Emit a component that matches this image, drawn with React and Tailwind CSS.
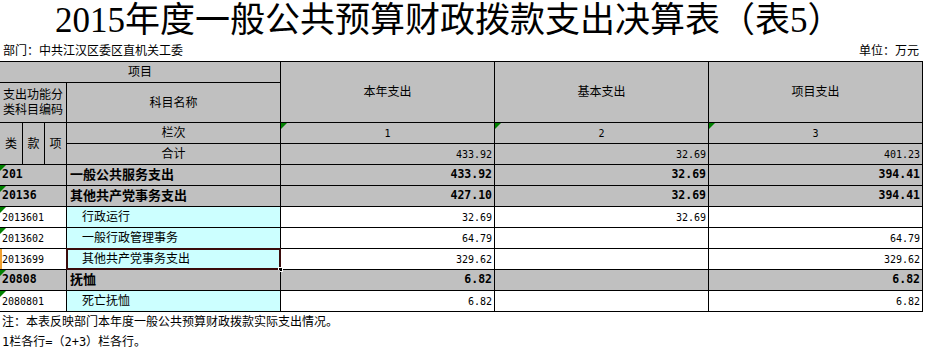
import React from "react";

const mono = "font-['DejaVu_Sans_Mono','Noto_Sans_CJK_SC',monospace]";

function Tri() {
  return (
    <span className="absolute left-0 top-0 w-0 h-0 border-t-[6px] border-r-[6px] border-t-[#008000] border-r-transparent" />
  );
}

function Num({ v, bold, bg }) {
  return (
    <div
      className={`${bg} flex items-center justify-end pr-[2px] ${mono} ${
        bold ? "text-[11.5px] font-bold" : "text-[10px]"
      }`}
    >
      {v}
    </div>
  );
}

const linhas = [
  { code: "201", nome: "一般公共服务支出", vals: ["433.92", "32.69", "394.41"], bold: true },
  { code: "20136", nome: "其他共产党事务支出", vals: ["427.10", "32.69", "394.41"], bold: true },
  { code: "2013601", nome: "行政运行", vals: ["32.69", "32.69", ""] },
  { code: "2013602", nome: "一般行政管理事务", vals: ["64.79", "", "64.79"] },
  { code: "2013699", nome: "其他共产党事务支出", vals: ["329.62", "", "329.62"], sel: true },
  { code: "20808", nome: "抚恤", vals: ["6.82", "", "6.82"], bold: true },
  { code: "2080801", nome: "死亡抚恤", vals: ["6.82", "", "6.82"] },
];

export default function App() {
  return (
    <div className="w-[925px] h-[354px] bg-white text-black font-['Liberation_Sans','Noto_Sans_CJK_SC',sans-serif] overflow-hidden">
      {/* TITULO */}
      <div className="h-[41px] pl-[55px] text-[35px] leading-[41px] whitespace-nowrap font-['Liberation_Serif','Noto_Sans_CJK_SC',serif]">
        2015年度一般公共预算财政拨款支出决算表（表5）
      </div>

      <div className="h-[20px] flex items-center justify-between pl-[3px] pr-[6px] text-[12px]">
        <span>部门：中共江汉区委区直机关工委</span>
        <span>单位：万元</span>
      </div>

      {/* TABELA */}
      <div className="w-[923px] grid grid-cols-[22px_21px_21px_213px_213px_213px_213px] grid-rows-[20px_39px_20px_20px_repeat(7,20px)] gap-px bg-black pt-px pr-px pb-px text-[12px]">
        <div className="col-span-4 bg-[#c0c0c0] flex items-center justify-center">项目</div>
        <div className="row-span-2 bg-[#c0c0c0] flex items-center justify-center">本年支出</div>
        <div className="row-span-2 bg-[#c0c0c0] flex items-center justify-center">基本支出</div>
        <div className="row-span-2 bg-[#c0c0c0] flex items-center justify-center">项目支出</div>

        <div className="col-span-3 bg-[#c0c0c0] flex items-center pl-[3px] leading-[15px]">
          支出功能分类科目编码
        </div>
        <div className="bg-[#c0c0c0] flex items-center justify-center">科目名称</div>

        <div className="row-span-2 bg-[#c0c0c0] flex items-center justify-center">类</div>
        <div className="row-span-2 bg-[#c0c0c0] flex items-center justify-center">款</div>
        <div className="row-span-2 bg-[#c0c0c0] flex items-center justify-center">项</div>
        <div className="bg-[#c0c0c0] flex items-center justify-center">栏次</div>
        {["1", "2", "3"].map(n => (
          <div key={n} className={`relative bg-[#c0c0c0] flex items-center justify-center ${mono} text-[10px]`}>
            <Tri />
            {n}
          </div>
        ))}

        <div className="bg-[#c0c0c0] flex items-center justify-center">合计</div>
        <Num v="433.92" bg="bg-[#c0c0c0]" />
        <Num v="32.69" bg="bg-[#c0c0c0]" />
        <Num v="401.23" bg="bg-[#c0c0c0]" />

        {linhas.map((l, i) => {
          const bgRow = l.bold ? "bg-[#c0c0c0]" : "bg-white";
          const bgNome = l.bold ? "bg-[#c0c0c0]" : "bg-[#ccffff]";
          return (
            <React.Fragment key={i}>
              <div
                className={`relative col-span-3 ${bgRow} flex items-center pl-[2px] ${mono} ${
                  l.bold ? "text-[11.5px] font-bold" : "text-[10px]"
                }`}
              >
                {l.sel ? (
                  <span className="absolute left-0 top-0 bottom-0 w-[2px] bg-[#f0a030]" />
                ) : (
                  <Tri />
                )}
                {l.code}
              </div>
              <div
                className={`relative ${bgNome} flex items-center ${
                  l.bold ? "pl-[3px] text-[13px] font-bold" : "pl-[15px] text-[12px]"
                }`}
              >
                {l.nome}
                {l.sel && (
                  <>
                    <span className="absolute -left-px -top-px -right-px -bottom-px border-2 border-[#3a0c0c]" />
                    <span className="absolute -right-[3px] -bottom-[3px] w-[5px] h-[5px] bg-black border border-white" />
                  </>
                )}
              </div>
              {l.vals.map((v, j) => (
                <Num key={j} v={v} bold={l.bold} bg={bgRow} />
              ))}
            </React.Fragment>
          );
        })}
      </div>

      {/* NOTAS */}
      <div className="pl-[2px] text-[12px] leading-[20px]">
        <p>注：本表反映部门本年度一般公共预算财政拨款实际支出情况。</p>
        <p className={mono}>1栏各行=（2+3）栏各行。</p>
      </div>
    </div>
  );
}
